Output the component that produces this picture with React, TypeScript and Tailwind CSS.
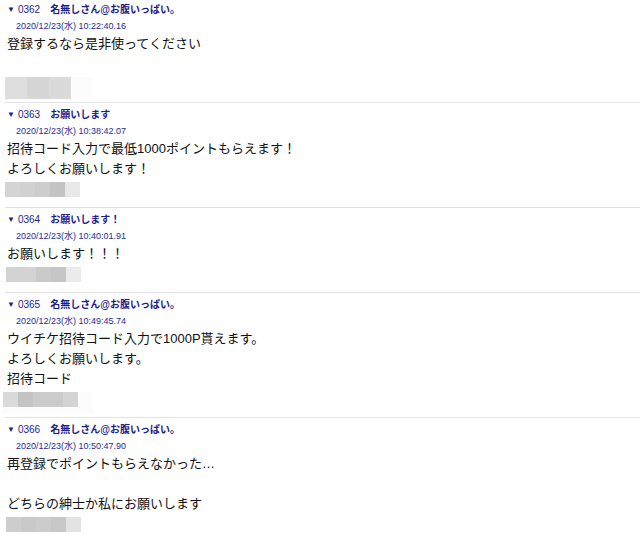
import React from 'react';

interface Post {
  no: string;
  name: string;
  date: string;
  lines: string[];
  mosaic: { left: number; cell: number; height: number; colors: string[]; cellWidths?: number[]; backdrop?: number };
}

const posts: Post[] = [
  {
    no: '0362',
    name: '名無しさん@お腹いっぱい。',
    date: '2020/12/23(水) 10:22:40.16',
    lines: ['登録するなら是非使ってください', ''],
    mosaic: { left: 5, cell: 22, height: 22, colors: ['#dedede', '#d6d6d6', '#dadada', '#fcfcfc'] },
  },
  {
    no: '0363',
    name: 'お願いします',
    date: '2020/12/23(水) 10:38:42.07',
    lines: ['招待コード入力で最低1000ポイントもらえます！', 'よろしくお願いします！'],
    mosaic: { left: 5, cell: 15, height: 15, colors: ['#d4d4d4', '#d1d1d1', '#cdcdcd', '#c4c4c4', '#e8e8e8'] },
  },
  {
    no: '0364',
    name: 'お願いします！',
    date: '2020/12/23(水) 10:40:01.91',
    lines: ['お願いします！！！'],
    mosaic: {
      left: 6,
      cell: 15,
      height: 15,
      colors: ['#d3d3d3', '#cacaca', '#c6c6c6', '#ebebeb'],
      cellWidths: [30, 15, 15, 15],
    },
  },
  {
    no: '0365',
    name: '名無しさん@お腹いっぱい。',
    date: '2020/12/23(水) 10:49:45.74',
    lines: ['ウイチケ招待コード入力で1000P貰えます。', 'よろしくお願いします。', '招待コード'],
    mosaic: {
      left: 3,
      cell: 15,
      height: 15,
      colors: ['#dadada', '#c4c4c4', '#cbcbcb', '#cbcbcb', '#d4d4d4'],
      backdrop: 90,
    },
  },
  {
    no: '0366',
    name: '名無しさん@お腹いっぱい。',
    date: '2020/12/23(水) 10:50:47.90',
    lines: ['再登録でポイントもらえなかった…', '', 'どちらの紳士か私にお願いします'],
    mosaic: { left: 6, cell: 15, height: 15, colors: ['#cdcdcd', '#c9c9c9', '#cccccc', '#c8c8c8', '#e3e3e3'] },
  },
];

const Mosaic: React.FC<{ m: Post['mosaic'] }> = ({ m }) => (
  <div className="h-[25px]" style={{ paddingLeft: m.left }}>
    <div className="flex" style={{ width: m.backdrop, height: m.backdrop ? 22 : m.height, background: m.backdrop ? '#fcfcfc' : undefined }}>
      {m.colors.map((c, i) => (
        <div key={i} style={{ width: m.cellWidths ? m.cellWidths[i] : m.cell, height: m.height, background: c }} />
      ))}
    </div>
  </div>
);

const PostItem: React.FC<{ post: Post; first: boolean }> = ({ post, first }) => (
  <div>
    {!first && (
      <div className="ml-[5px]">
        <div className="h-px bg-[#e4e4e4]" />
      </div>
    )}
    <div className={first ? 'pt-[3px]' : 'pt-[5px]'}>
      <div className="flex h-[14px] items-center pl-[7px] text-[10px] leading-[14px] text-[#1d1d8c]">
        <span className="text-[8px]">▼</span>
        <span className="ml-[3px]">{post.no}</span>
        <span className="ml-[10px] font-bold">{post.name}</span>
      </div>
      <div className="mt-[3px] h-[12px] pl-[16px] text-[9px] leading-[12px] text-[#2a2a96]">{post.date}</div>
      <div className="mt-[2px] pl-[7px] text-[13px] leading-[20px] text-[#111]">
        {post.lines.map((l, i) => (
          <div key={i} className="h-[20px]">
            {l}
          </div>
        ))}
      </div>
      <div className="mt-[3px]">
        <Mosaic m={post.mosaic} />
      </div>
    </div>
  </div>
);

export default function App() {
  return (
    <div
      className="h-[541px] w-[640px] overflow-hidden bg-white"
      style={{ fontFamily: '"Liberation Sans", "Noto Sans CJK JP", sans-serif' }}
    >
      {posts.map((p, i) => (
        <PostItem key={p.no} post={p} first={i === 0} />
      ))}
    </div>
  );
}
